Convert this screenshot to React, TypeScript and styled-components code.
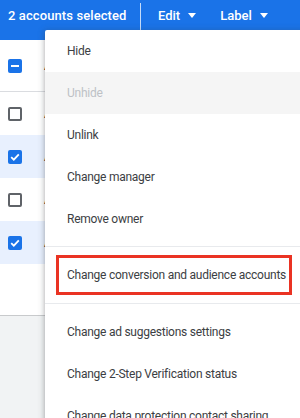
import React from "react";
import styled, { createGlobalStyle } from "styled-components";

const GlobalStyle = createGlobalStyle`
  html, body {
    margin: 0;
    padding: 0;
    background: #fff;
  }
  body {
    font-family: Roboto, "Noto Sans", Arial, sans-serif;
  }
`;

type Row = { selected: boolean };

const rows: Row[] = [
  { selected: false },
  { selected: true },
  { selected: false },
  { selected: true },
];

const menuGroups: { label: string; disabled?: boolean; highlighted?: boolean }[][] = [
  [
    { label: "Hide" },
    { label: "Unhide", disabled: true },
    { label: "Unlink" },
    { label: "Change manager" },
    { label: "Remove owner" },
  ],
  [{ label: "Change conversion and audience accounts", highlighted: true }],
  [
    { label: "Change ad suggestions settings" },
    { label: "Change 2-Step Verification status" },
    { label: "Change data protection contact sharing" },
  ],
];

const Caret = () => (
  <svg width="8" height="5" viewBox="0 0 8 5">
    <path d="M0 0 L8 0 L4 5 Z" fill="#fff" />
  </svg>
);

const Checkbox = ({ state }: { state: "off" | "on" | "mixed" }) => (
  <Box $filled={state !== "off"}>
    {state === "on" && (
      <svg width="12" height="12" viewBox="0 0 12 12">
        <path
          d="M2.2 6.2 L4.8 8.7 L9.8 3.4"
          stroke="#fff"
          strokeWidth="1.8"
          fill="none"
        />
      </svg>
    )}
    {state === "mixed" && <Dash />}
  </Box>
);

export default function App() {
  return (
    <>
      <GlobalStyle />
      <Page>
        <TopBar>
          <Selected>2 accounts selected</Selected>
          <Divider />
          <BarButton>
            Edit <Caret />
          </BarButton>
          <BarButton>
            Label <Caret />
          </BarButton>
        </TopBar>

        <Table>
          <HeaderRow>
            <Checkbox state="mixed" />
            <CellText>Account</CellText>
          </HeaderRow>
          {rows.map((r, i) => (
            <DataRow key={i} $selected={r.selected}>
              <Checkbox state={r.selected ? "on" : "off"} />
              <CellText>Account</CellText>
            </DataRow>
          ))}
          <Filler />
        </Table>
        <Footer />

        <Menu>
          {menuGroups.map((group, gi) => (
            <MenuGroup key={gi} $first={gi === 0}>
              {group.map((item) => (
                <MenuItem
                  key={item.label}
                  $disabled={item.disabled}
                  $highlighted={item.highlighted}
                >
                  {item.label}
                </MenuItem>
              ))}
            </MenuGroup>
          ))}
        </Menu>
      </Page>
    </>
  );
}

const Page = styled.div`
  position: relative;
  width: 300px;
  height: 418px;
  overflow: hidden;
  display: flex;
  flex-direction: column;
`;

const TopBar = styled.div`
  height: 40px;
  flex-shrink: 0;
  background: #1a73e8;
  color: #fff;
  display: flex;
  align-items: flex-start;
  padding: 0 0 0 8px;
  box-sizing: border-box;
`;

const Selected = styled.span`
  font-size: 13px;
  font-weight: 500;
  line-height: 32px;
  letter-spacing: 0.1px;
  width: 132px;
`;

const Divider = styled.div`
  width: 1px;
  height: 27px;
  margin-top: 3px;
  background: rgba(255, 255, 255, 0.75);
`;

const BarButton = styled.span`
  font-size: 13px;
  font-weight: 500;
  line-height: 32px;
  margin-left: 17px;
  display: flex;
  align-items: center;
  gap: 8px;
  &:last-child {
    margin-left: 24px;
  }
  svg {
    margin-top: -1px;
  }
`;

const Table = styled.div`
  display: flex;
  flex-direction: column;
  background: #fff;
`;

const HeaderRow = styled.div`
  height: 52px;
  border-bottom: 1px solid #dadce0;
  display: flex;
  align-items: center;
  padding-left: 8px;
  box-sizing: border-box;
`;

const DataRow = styled.div<{ $selected: boolean }>`
  height: 43px;
  display: flex;
  align-items: center;
  padding-left: 8px;
  background: ${(p) => (p.$selected ? "#e8f0fe" : "#fff")};
`;

const CellText = styled.span`
  margin-left: 22px;
  font-size: 12px;
  color: #202124;
`;

const Filler = styled.div`
  height: 51px;
  border-bottom: 1px solid #c8cacc;
`;

const Footer = styled.div`
  flex: 1;
  background: #f1f3f4;
`;

const Box = styled.span<{ $filled: boolean }>`
  width: 14px;
  height: 14px;
  box-sizing: border-box;
  border-radius: 2px;
  flex-shrink: 0;
  display: flex;
  align-items: center;
  justify-content: center;
  background: ${(p) => (p.$filled ? "#1a73e8" : "#fff")};
  border: ${(p) => (p.$filled ? "none" : "2px solid #5f6368")};
`;

const Dash = styled.span`
  width: 8px;
  height: 2px;
  background: #fff;
`;

const Menu = styled.div`
  position: absolute;
  left: 45px;
  top: 30px;
  width: 280px;
  background: #fff;
  box-shadow: 0 2px 4px rgba(60, 64, 67, 0.3), 0 1px 6px 2px rgba(60, 64, 67, 0.15);
  border-radius: 2px;
`;

const MenuGroup = styled.div<{ $first: boolean }>`
  padding: ${(p) => (p.$first ? "0 0 6px" : "7px 0")};
  & + & {
    border-top: 1px solid #e8eaed;
  }
`;

const MenuItem = styled.div<{ $disabled?: boolean; $highlighted?: boolean }>`
  height: 42px;
  display: flex;
  align-items: center;
  padding-left: 22px;
  font-size: 12px;
  letter-spacing: -0.25px;
  white-space: nowrap;
  color: ${(p) => (p.$disabled ? "#bdc1c6" : "#3c4043")};
  background: ${(p) => (p.$disabled ? "#f5f5f5" : "transparent")};
  ${(p) =>
    p.$highlighted &&
    `
    margin-left: 11px;
    width: 236px;
    height: 40px;
    margin-top: 1px;
    margin-bottom: 1px;
    padding-left: 8px;
    box-sizing: border-box;
    border: 3px solid #ea3323;
  `}
`;
